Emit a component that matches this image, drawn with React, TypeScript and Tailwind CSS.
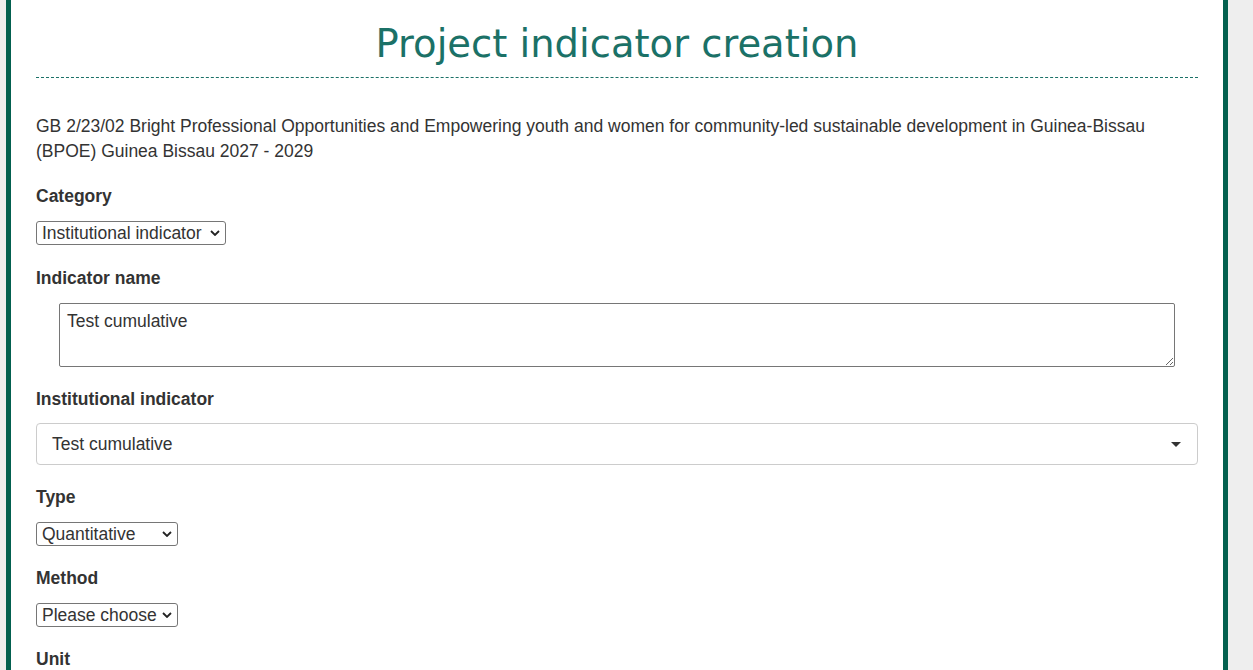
import React from "react";

function Label({ children, mb = "mb-[13px]" }: { children: React.ReactNode; mb?: string }) {
  return <div className={`font-bold pt-[1px] leading-[24px] ${mb}`}>{children}</div>;
}

function Chevron() {
  return (
    <svg
      width="10"
      height="6"
      viewBox="0 0 10 6"
      className="absolute right-[6px] top-[9px] pointer-events-none"
    >
      <path d="M1 1 L5 5 L9 1" fill="none" stroke="#222" strokeWidth="1.8" />
    </svg>
  );
}

function NativeSelect({ value, width }: { value: string; width: string }) {
  return (
    <div className="relative w-fit">
      <select
        className={`appearance-none block h-[24px] ${width} border border-[#767676] rounded-[3px] bg-white pl-[5px] pr-[18px] text-[17.5px] leading-[22px] text-[#333] [font-family:'Liberation_Sans',Arial,sans-serif]`}
        defaultValue={value}
      >
        <option value={value}>{value}</option>
      </select>
      <Chevron />
    </div>
  );
}

export default function App() {
  return (
    <div className="h-[670px] w-[1253px] overflow-hidden bg-[#eeeeee] text-[17.5px] text-[#333333] [font-family:'Liberation_Sans',Arial,sans-serif]">
      <div className="ml-[6px] w-[1222px] h-full bg-white border-x-[5px] border-[#03604f] px-[25px]">
        <h1 className="pt-[22px] pb-[11px] border-b border-dashed border-[#1b7167] text-center text-[38.5px] leading-[44px] font-normal text-[#1b7167] [font-family:'DejaVu_Sans',Verdana,sans-serif]">
          Project indicator creation
        </h1>
        <p className="mt-[36px] leading-[25px]">
          GB 2/23/02 Bright Professional Opportunities and Empowering youth and women for community-led sustainable development in Guinea-Bissau (BPOE) Guinea Bissau 2027 - 2029
        </p>

        <div className="mt-[19px] mb-[20px]">
          <Label>Category</Label>
          <NativeSelect value="Institutional indicator" width="w-[190px]" />
        </div>

        <div className="mb-[19px]">
          <Label>Indicator name</Label>
          <div className="pl-[23px]">
            <textarea
              className="block w-[1116px] h-[64px] border border-[#767676] rounded-[2px] px-[7px] pt-[4px] text-[17.5px] text-[#333] resize-y"
              defaultValue="Test cumulative"
            />
          </div>
        </div>

        <div className="mb-[19px]">
          <Label mb="mb-[12px]">Institutional indicator</Label>
          <div className="flex items-center justify-between h-[42px] border border-[#cccccc] rounded-[4px] pl-[15px] pr-[15px] bg-white">
            <span>Test cumulative</span>
            <svg width="10" height="5" viewBox="0 0 10 5" className="mr-[1px]">
              <path d="M0 0 L10 0 L5 5 Z" fill="#333" />
            </svg>
          </div>
        </div>

        <div className="mb-[19px]">
          <Label>Type</Label>
          <NativeSelect value="Quantitative" width="w-[142px]" />
        </div>

        <div className="mb-[19px]">
          <Label>Method</Label>
          <NativeSelect value="Please choose" width="w-[142px]" />
        </div>

        <div className="mb-[19px]">
          <Label>Unit</Label>
        </div>
      </div>
    </div>
  );
}
